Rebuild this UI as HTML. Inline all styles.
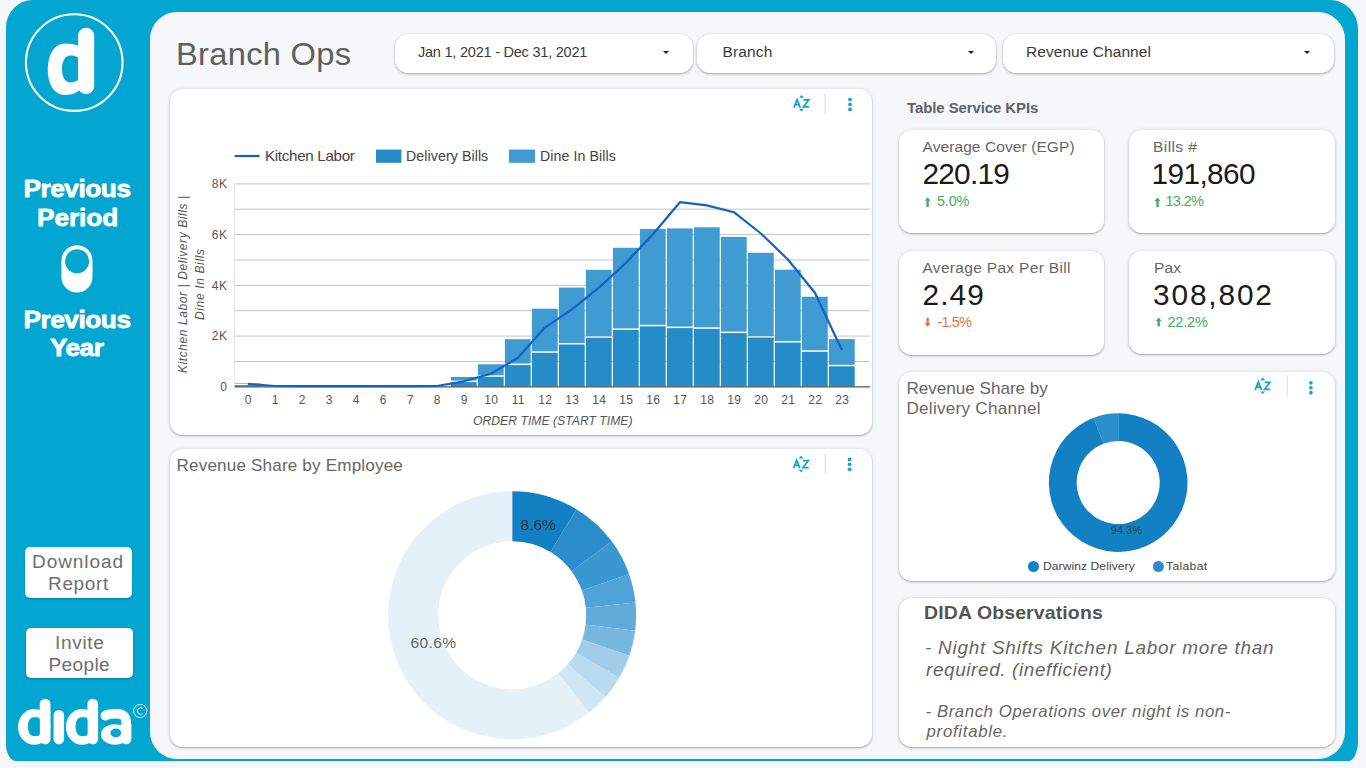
<!DOCTYPE html>
<html><head><meta charset="utf-8">
<style>
*{margin:0;padding:0;box-sizing:border-box}
html,body{width:1366px;height:768px;overflow:hidden;background:#f5f7f9;font-family:"Liberation Sans", sans-serif}
.abs{position:absolute}
.frame{position:absolute;left:6px;top:0px;width:1352px;height:761px;background:#03a5d1;border-radius:27px 28px 10px 10px / 27px 29px 20px 17px}
.panel{position:absolute;left:150px;top:12px;width:1195px;height:747px;background:#f5f7f9;border-radius:27px}
.card{position:absolute;background:#fff;border-radius:12.5px;box-shadow:0 1px 2px rgba(0,0,0,.3),0 0 4px rgba(0,0,0,.1)}
.dd{position:absolute;background:#fff;border-radius:13px;box-shadow:0 1px 2.5px rgba(0,0,0,.32),0 0 1.5px rgba(0,0,0,.12)}
.dd i{position:absolute;top:17px;width:0;height:0;border-left:3px solid transparent;border-right:3px solid transparent;border-top:3.5px solid #222}
.btn{position:absolute;background:#fff;border-radius:5px;box-shadow:0 1px 2px rgba(0,0,0,.25)}
svg text{font-family:"Liberation Sans", sans-serif}
</style></head><body>
<div class="frame"></div>
<div class="panel"></div>

<svg class="abs" style="left:0;top:0" width="150" height="768" viewBox="0 0 150 768">
 <circle cx="74.25" cy="62.6" r="48.3" fill="none" stroke="#fff" stroke-width="2.1"/>
 <path d="M80,46.5 C75,44 69,43.4 65,43.4 C54,43.4 47.8,55 47.8,69.5 C47.8,84 54,95 65,95 C71,95 76,93 80,90 Z" fill="#fff"/>
 <path d="M78.5,57.5 C76,56 73,55.4 70.5,55.4 C65,55.4 61.9,61.5 61.9,69 C61.9,76.5 65,82.5 70.5,82.5 C73,82.5 76,81.5 78.5,80 Z" fill="#03a5d1"/>
 <rect x="78" y="27.8" width="16.2" height="66.4" rx="8" fill="#fff"/>
 <rect x="61.4" y="245.2" width="31.1" height="47.3" rx="15.55" fill="#fff"/>
 <circle cx="77.1" cy="261.3" r="12" fill="#03a5d1"/>
 <!-- dida wordmark -->
 <ellipse cx="34.2" cy="726.9" rx="16.2" ry="17.9" fill="#fff"/>
 <rect x="39.7" y="698.7" width="10.8" height="45.6" rx="5.4" fill="#fff"/>
 <path d="M39.9,720.3 Q39.9,717.2 36.8,717.2 L33.5,717.2 C30,717.2 27.9,721 27.9,726.6 C27.9,732 30,736.1 33.5,736.1 L36.8,736.1 Q39.9,736.1 39.9,733 Z" fill="#03a5d1"/>
 <rect x="53.6" y="710" width="10.5" height="34.3" rx="5.25" fill="#fff"/>
 <ellipse cx="82" cy="726.9" rx="16.1" ry="17.9" fill="#fff"/>
 <rect x="87.4" y="698.7" width="10.7" height="45.6" rx="5.35" fill="#fff"/>
 <path d="M87.6,720.3 Q87.6,717.2 84.5,717.2 L81.3,717.2 C77.8,717.2 75.6,721 75.6,726.6 C75.6,732 77.8,736.1 81.3,736.1 L84.5,736.1 Q87.6,736.1 87.6,733 Z" fill="#03a5d1"/>
 <path d="M105.3,715.6 Q109,713.75 116.5,713.75 Q126.2,713.75 126.2,722" stroke="#fff" stroke-width="9.6" stroke-linecap="round" fill="none"/>
 <rect x="121" y="720" width="10.4" height="24.3" rx="5.2" fill="#fff"/>
 <ellipse cx="115" cy="734.5" rx="14" ry="10.3" fill="#fff"/>
 <ellipse cx="115.8" cy="732.8" rx="5.4" ry="4.4" fill="#03a5d1"/>
 <circle cx="140.2" cy="711" r="6.6" fill="none" stroke="#fff" stroke-width="0.9"/>
 <path d="M142.6,708.3 A3.3,3.3 0 1 0 142.6,713.7" fill="none" stroke="#fff" stroke-width="0.9"/>
</svg>
<div class="btn" style="left:24.8px;top:547px;width:107px;height:51px"></div>
<div class="btn" style="left:26px;top:628.3px;width:106.6px;height:49.5px"></div>

<div class="dd" style="left:394.8px;top:34px;width:297.8px;height:38.6px"><i style="left:268.7px"></i></div>
<div class="dd" style="left:697px;top:34px;width:299px;height:38.6px"><i style="left:270.5px"></i></div>
<div class="dd" style="left:1002.5px;top:34px;width:331px;height:38.6px"><i style="left:301px"></i></div>

<div class="card" style="left:170px;top:89px;width:702.2px;height:345.8px"></div>
<div class="card" style="left:169.8px;top:449px;width:702.4px;height:297.8px"></div>
<div class="card" style="left:899px;top:130px;width:204.5px;height:103px"></div>
<div class="card" style="left:1129px;top:129.5px;width:205.5px;height:103.5px"></div>
<div class="card" style="left:899.3px;top:251px;width:204.5px;height:103.5px"></div>
<div class="card" style="left:1129.4px;top:250.6px;width:205.6px;height:103px"></div>
<div class="card" style="left:899px;top:372px;width:436px;height:208.5px"></div>
<div class="card" style="left:898.5px;top:597.5px;width:436.5px;height:149px"></div>

<svg class="abs" style="left:0;top:0" width="1366" height="768">
<line x1="234.4" y1="361.5" x2="870" y2="361.5" stroke="#c4c4c4" stroke-width="1"/>
<line x1="234.4" y1="336.1" x2="870" y2="336.1" stroke="#c4c4c4" stroke-width="1"/>
<line x1="234.4" y1="310.7" x2="870" y2="310.7" stroke="#c4c4c4" stroke-width="1"/>
<line x1="234.4" y1="285.4" x2="870" y2="285.4" stroke="#c4c4c4" stroke-width="1"/>
<line x1="234.4" y1="260.0" x2="870" y2="260.0" stroke="#c4c4c4" stroke-width="1"/>
<line x1="234.4" y1="234.6" x2="870" y2="234.6" stroke="#c4c4c4" stroke-width="1"/>
<line x1="234.4" y1="209.2" x2="870" y2="209.2" stroke="#c4c4c4" stroke-width="1"/>
<line x1="234.4" y1="183.9" x2="870" y2="183.9" stroke="#c4c4c4" stroke-width="1"/>
<text x="227.60" y="391.05" font-size="12" fill="#555" font-weight="normal" font-style="normal" letter-spacing="0.600" text-anchor="end" >0</text>
<text x="227.60" y="340.30" font-size="12" fill="#555" font-weight="normal" font-style="normal" letter-spacing="0.600" text-anchor="end" >2K</text>
<text x="227.60" y="289.55" font-size="12" fill="#555" font-weight="normal" font-style="normal" letter-spacing="0.600" text-anchor="end" >4K</text>
<text x="227.60" y="238.80" font-size="12" fill="#555" font-weight="normal" font-style="normal" letter-spacing="0.600" text-anchor="end" >6K</text>
<text x="227.60" y="188.05" font-size="12" fill="#555" font-weight="normal" font-style="normal" letter-spacing="0.600" text-anchor="end" >8K</text>
<line x1="234.4" y1="183" x2="234.4" y2="386" stroke="#e6e6e6" stroke-width="1"/>
<rect x="234.9" y="383.0" width="25.8" height="0.6" fill="#3f9bd1"/>
<rect x="234.9" y="385.1" width="25.8" height="1.5" fill="#268cc8"/>
<text x="248.20" y="404.00" font-size="12" fill="#555" font-weight="normal" font-style="normal" letter-spacing="0.300" text-anchor="middle" >0</text>
<rect x="261.9" y="387.0" width="25.8" height="0.0" fill="#268cc8"/>
<text x="275.20" y="404.00" font-size="12" fill="#555" font-weight="normal" font-style="normal" letter-spacing="0.300" text-anchor="middle" >1</text>
<rect x="288.9" y="387.0" width="25.8" height="0.0" fill="#268cc8"/>
<text x="302.20" y="404.00" font-size="12" fill="#555" font-weight="normal" font-style="normal" letter-spacing="0.300" text-anchor="middle" >2</text>
<rect x="315.9" y="387.0" width="25.8" height="0.0" fill="#268cc8"/>
<text x="329.20" y="404.00" font-size="12" fill="#555" font-weight="normal" font-style="normal" letter-spacing="0.300" text-anchor="middle" >3</text>
<rect x="342.9" y="387.0" width="25.8" height="0.0" fill="#268cc8"/>
<text x="356.20" y="404.00" font-size="12" fill="#555" font-weight="normal" font-style="normal" letter-spacing="0.300" text-anchor="middle" >4</text>
<rect x="369.9" y="387.0" width="25.8" height="0.0" fill="#268cc8"/>
<text x="383.20" y="404.00" font-size="12" fill="#555" font-weight="normal" font-style="normal" letter-spacing="0.300" text-anchor="middle" >6</text>
<rect x="396.9" y="387.0" width="25.8" height="0.0" fill="#268cc8"/>
<text x="410.20" y="404.00" font-size="12" fill="#555" font-weight="normal" font-style="normal" letter-spacing="0.300" text-anchor="middle" >7</text>
<rect x="423.9" y="387.0" width="25.8" height="0.0" fill="#268cc8"/>
<text x="437.20" y="404.00" font-size="12" fill="#555" font-weight="normal" font-style="normal" letter-spacing="0.300" text-anchor="middle" >8</text>
<rect x="450.9" y="376.9" width="25.8" height="3.7" fill="#3f9bd1"/>
<rect x="450.9" y="382.1" width="25.8" height="4.5" fill="#268cc8"/>
<text x="464.20" y="404.00" font-size="12" fill="#555" font-weight="normal" font-style="normal" letter-spacing="0.300" text-anchor="middle" >9</text>
<rect x="477.9" y="364.3" width="25.8" height="11.0" fill="#3f9bd1"/>
<rect x="477.9" y="376.8" width="25.8" height="9.8" fill="#268cc8"/>
<text x="491.20" y="404.00" font-size="12" fill="#555" font-weight="normal" font-style="normal" letter-spacing="0.300" text-anchor="middle" >10</text>
<rect x="504.9" y="339.2" width="25.8" height="24.4" fill="#3f9bd1"/>
<rect x="504.9" y="365.1" width="25.8" height="21.5" fill="#268cc8"/>
<text x="518.20" y="404.00" font-size="12" fill="#555" font-weight="normal" font-style="normal" letter-spacing="0.300" text-anchor="middle" >11</text>
<rect x="531.9" y="308.7" width="25.8" height="42.6" fill="#3f9bd1"/>
<rect x="531.9" y="352.8" width="25.8" height="33.8" fill="#268cc8"/>
<text x="545.20" y="404.00" font-size="12" fill="#555" font-weight="normal" font-style="normal" letter-spacing="0.300" text-anchor="middle" >12</text>
<rect x="558.9" y="287.6" width="25.8" height="55.4" fill="#3f9bd1"/>
<rect x="558.9" y="344.5" width="25.8" height="42.1" fill="#268cc8"/>
<text x="572.20" y="404.00" font-size="12" fill="#555" font-weight="normal" font-style="normal" letter-spacing="0.300" text-anchor="middle" >13</text>
<rect x="585.9" y="269.8" width="25.8" height="66.4" fill="#3f9bd1"/>
<rect x="585.9" y="337.7" width="25.8" height="48.9" fill="#268cc8"/>
<text x="599.20" y="404.00" font-size="12" fill="#555" font-weight="normal" font-style="normal" letter-spacing="0.300" text-anchor="middle" >14</text>
<rect x="612.9" y="247.8" width="25.8" height="80.6" fill="#3f9bd1"/>
<rect x="612.9" y="329.9" width="25.8" height="56.7" fill="#268cc8"/>
<text x="626.20" y="404.00" font-size="12" fill="#555" font-weight="normal" font-style="normal" letter-spacing="0.300" text-anchor="middle" >15</text>
<rect x="639.9" y="229.0" width="25.8" height="95.8" fill="#3f9bd1"/>
<rect x="639.9" y="326.3" width="25.8" height="60.3" fill="#268cc8"/>
<text x="653.20" y="404.00" font-size="12" fill="#555" font-weight="normal" font-style="normal" letter-spacing="0.300" text-anchor="middle" >16</text>
<rect x="666.9" y="228.4" width="25.8" height="98.2" fill="#3f9bd1"/>
<rect x="666.9" y="328.1" width="25.8" height="58.5" fill="#268cc8"/>
<text x="680.20" y="404.00" font-size="12" fill="#555" font-weight="normal" font-style="normal" letter-spacing="0.300" text-anchor="middle" >17</text>
<rect x="693.9" y="227.3" width="25.8" height="100.0" fill="#3f9bd1"/>
<rect x="693.9" y="328.8" width="25.8" height="57.8" fill="#268cc8"/>
<text x="707.20" y="404.00" font-size="12" fill="#555" font-weight="normal" font-style="normal" letter-spacing="0.300" text-anchor="middle" >18</text>
<rect x="720.9" y="236.9" width="25.8" height="94.7" fill="#3f9bd1"/>
<rect x="720.9" y="333.1" width="25.8" height="53.5" fill="#268cc8"/>
<text x="734.20" y="404.00" font-size="12" fill="#555" font-weight="normal" font-style="normal" letter-spacing="0.300" text-anchor="middle" >19</text>
<rect x="747.9" y="252.8" width="25.8" height="83.2" fill="#3f9bd1"/>
<rect x="747.9" y="337.5" width="25.8" height="49.1" fill="#268cc8"/>
<text x="761.20" y="404.00" font-size="12" fill="#555" font-weight="normal" font-style="normal" letter-spacing="0.300" text-anchor="middle" >20</text>
<rect x="774.9" y="269.7" width="25.8" height="71.4" fill="#3f9bd1"/>
<rect x="774.9" y="342.6" width="25.8" height="44.0" fill="#268cc8"/>
<text x="788.20" y="404.00" font-size="12" fill="#555" font-weight="normal" font-style="normal" letter-spacing="0.300" text-anchor="middle" >21</text>
<rect x="801.9" y="296.8" width="25.8" height="53.5" fill="#3f9bd1"/>
<rect x="801.9" y="351.8" width="25.8" height="34.8" fill="#268cc8"/>
<text x="815.20" y="404.00" font-size="12" fill="#555" font-weight="normal" font-style="normal" letter-spacing="0.300" text-anchor="middle" >22</text>
<rect x="828.9" y="339.1" width="25.8" height="25.7" fill="#3f9bd1"/>
<rect x="828.9" y="366.3" width="25.8" height="20.3" fill="#268cc8"/>
<text x="842.20" y="404.00" font-size="12" fill="#555" font-weight="normal" font-style="normal" letter-spacing="0.300" text-anchor="middle" >23</text>
<line x1="234.4" y1="386.9" x2="870" y2="386.9" stroke="#555" stroke-width="1.2"/>
<polyline points="247.9,383.9 274.9,386.0 301.9,386.2 328.9,386.2 355.9,386.2 382.9,386.2 409.9,386.1 436.9,386.0 463.9,381.3 490.9,373.8 517.9,357.7 544.9,327.6 571.9,309.3 598.9,287.6 625.9,263.0 652.9,234.2 679.9,202.2 706.9,205.4 733.9,212.2 760.9,233.5 787.9,259.5 814.9,292.7 841.9,350.0" fill="none" stroke="#1163c6" stroke-width="2.2" stroke-linejoin="round"/>
<line x1="234.6" y1="156" x2="259.6" y2="156" stroke="#1163c6" stroke-width="2.2"/>
<rect x="376" y="149.6" width="25.4" height="13.2" fill="#268cc8"/>
<rect x="509" y="149.6" width="26" height="13.2" fill="#3f9bd1"/>
<g transform="translate(186.6,284.2) rotate(-90)"><text x="0.00" y="0.00" font-size="12" fill="#555" font-weight="normal" font-style="italic" letter-spacing="0.590" text-anchor="middle" >Kitchen Labor | Delivery Bills |</text></g>
<g transform="translate(203.6,284.2) rotate(-90)"><text x="0.00" y="0.00" font-size="12" fill="#555" font-weight="normal" font-style="italic" letter-spacing="0.640" text-anchor="middle" >Dine In Bills</text></g>
<path d="M512.20,491.30 A124,124 0 0 1 576.44,509.23 L550.53,552.00 A74,74 0 0 0 512.20,541.30 Z" fill="#1380c4"/>
<path d="M576.44,509.23 A124,124 0 0 1 611.75,541.37 L571.61,571.18 A74,74 0 0 0 550.53,552.00 Z" fill="#2a8ccb"/>
<path d="M611.75,541.37 A124,124 0 0 1 629.09,573.91 L581.96,590.60 A74,74 0 0 0 571.61,571.18 Z" fill="#3a97d0"/>
<path d="M629.09,573.91 A124,124 0 0 1 635.54,602.55 L585.81,607.69 A74,74 0 0 0 581.96,590.60 Z" fill="#50a3d6"/>
<path d="M635.54,602.55 A124,124 0 0 1 635.25,630.63 L585.63,624.45 A74,74 0 0 0 585.81,607.69 Z" fill="#62abd9"/>
<path d="M635.25,630.63 A124,124 0 0 1 629.44,655.67 L582.17,639.39 A74,74 0 0 0 585.63,624.45 Z" fill="#78b8e0"/>
<path d="M629.44,655.67 A124,124 0 0 1 619.26,677.86 L576.09,652.64 A74,74 0 0 0 582.17,639.39 Z" fill="#a2cdea"/>
<path d="M619.26,677.86 A124,124 0 0 1 605.36,697.14 L567.79,664.14 A74,74 0 0 0 576.09,652.64 Z" fill="#b8dbef"/>
<path d="M605.36,697.14 A124,124 0 0 1 589.05,712.61 L558.06,673.37 A74,74 0 0 0 567.79,664.14 Z" fill="#d0e6f3"/>
<path d="M589.05,712.61 A124,124 0 1 1 512.20,491.30 L512.20,541.30 A74,74 0 1 0 558.06,673.37 Z" fill="#e5f1f9"/>
<path d="M1118.20,413.30 A69.3,69.3 0 1 1 1093.70,417.77 L1103.53,443.78 A41.5,41.5 0 1 0 1118.20,441.10 Z" fill="#1380c4"/>
<path d="M1093.70,417.77 A69.3,69.3 0 0 1 1118.20,413.30 L1118.20,441.10 A41.5,41.5 0 0 0 1103.53,443.78 Z" fill="#2b8dca"/>
<circle cx="1033.5" cy="566.5" r="5.5" fill="#1380c4"/>
<circle cx="1158.4" cy="566.5" r="5.5" fill="#2b8dca"/>
<path d="M794.00,107.60 L797.10,99.40 L800.20,107.60 M795.20,104.70 H799.00 M803.40,99.95 H808.70 L803.40,106.85 H809.10" fill="none" stroke="#14a2cf" stroke-width="1.75"/><path d="M799.05,97.80 L801.50,95.10 L803.95,97.80 Z M799.05,109.10 L801.50,111.60 L803.95,109.10 Z" fill="#14a2cf"/><line x1="825.1" y1="93.20" x2="825.1" y2="113.30" stroke="#c3e6f2" stroke-width="1.1"/><circle cx="850" cy="99.50" r="1.85" fill="#14a2cf"/><circle cx="850" cy="104.45" r="1.85" fill="#14a2cf"/><circle cx="850" cy="109.40" r="1.85" fill="#14a2cf"/>
<path d="M793.60,468.30 L796.70,460.10 L799.80,468.30 M794.80,465.40 H798.60 M803.00,460.65 H808.30 L803.00,467.55 H808.70" fill="none" stroke="#14a2cf" stroke-width="1.75"/><path d="M798.65,458.50 L801.10,455.80 L803.55,458.50 Z M798.65,469.80 L801.10,472.30 L803.55,469.80 Z" fill="#14a2cf"/><line x1="825.3" y1="453.90" x2="825.3" y2="474.00" stroke="#c3e6f2" stroke-width="1.1"/><circle cx="849.6" cy="459.40" r="1.85" fill="#14a2cf"/><circle cx="849.6" cy="464.35" r="1.85" fill="#14a2cf"/><circle cx="849.6" cy="469.30" r="1.85" fill="#14a2cf"/>
<path d="M1255.20,390.00 L1258.30,381.80 L1261.40,390.00 M1256.40,387.10 H1260.20 M1264.60,382.35 H1269.90 L1264.60,389.25 H1270.30" fill="none" stroke="#14a2cf" stroke-width="1.75"/><path d="M1260.25,380.20 L1262.70,377.50 L1265.15,380.20 Z M1260.25,391.50 L1262.70,394.00 L1265.15,391.50 Z" fill="#14a2cf"/><line x1="1287.3" y1="375.60" x2="1287.3" y2="395.70" stroke="#c3e6f2" stroke-width="1.1"/><circle cx="1310.9" cy="382.80" r="1.85" fill="#14a2cf"/><circle cx="1310.9" cy="387.75" r="1.85" fill="#14a2cf"/><circle cx="1310.9" cy="392.70" r="1.85" fill="#14a2cf"/>
<path d="M927.6,197.2 l3,3.6 h-1.8 v6.1 h-2.4 v-6.1 h-1.8 z" fill="#47ad56"/>
<path d="M1157.5,197.5 l3,3.6 h-1.8 v5.8 h-2.4 v-5.8 h-1.8 z" fill="#47ad56"/>
<path d="M1158.7,317.5 l3,3.6 h-1.8 v5.3 h-2.4 v-5.3 h-1.8 z" fill="#47ad56"/>
<path d="M927.6,326.9 l3,-3.6 h-1.8 v-5.5 h-2.4 v5.5 h-1.8 z" fill="#e8704a"/>
<g transform="translate(176.00,65.00) scale(1.07,1)"><text x="0.00" y="0.00" font-size="30.5" fill="#5f5f5f" font-weight="normal" font-style="normal" letter-spacing="0.285" text-anchor="start" >Branch Ops</text></g>
<text x="418.00" y="57.00" font-size="14.5" fill="#3a3a3a" font-weight="normal" font-style="normal" letter-spacing="-0.224" text-anchor="start" >Jan 1, 2021 - Dec 31, 2021</text>
<g transform="translate(722.50,57.00) scale(1.07,1)"><text x="0.00" y="0.00" font-size="14.5" fill="#3a3a3a" font-weight="normal" font-style="normal" letter-spacing="0.120" text-anchor="start" >Branch</text></g>
<g transform="translate(1026.00,56.90) scale(1.07,1)"><text x="0.00" y="0.00" font-size="14.5" fill="#3a3a3a" font-weight="normal" font-style="normal" letter-spacing="0.056" text-anchor="start" >Revenue Channel</text></g>
<g transform="translate(23.50,197.10) scale(1.07,1)"><text x="0.00" y="0.00" font-size="24.5" fill="#fff" font-weight="bold" font-style="normal" letter-spacing="-0.429" text-anchor="start" stroke="#fff" stroke-width="0.8" stroke-linejoin="round">Previous</text></g>
<g transform="translate(37.00,225.90) scale(1.07,1)"><text x="0.00" y="0.00" font-size="24.5" fill="#fff" font-weight="bold" font-style="normal" letter-spacing="-0.040" text-anchor="start" stroke="#fff" stroke-width="0.8" stroke-linejoin="round">Period</text></g>
<g transform="translate(23.50,328.10) scale(1.07,1)"><text x="0.00" y="0.00" font-size="24.5" fill="#fff" font-weight="bold" font-style="normal" letter-spacing="-0.429" text-anchor="start" stroke="#fff" stroke-width="0.8" stroke-linejoin="round">Previous</text></g>
<g transform="translate(50.00,355.90) scale(1.07,1)"><text x="0.00" y="0.00" font-size="24.5" fill="#fff" font-weight="bold" font-style="normal" letter-spacing="-0.466" text-anchor="start" stroke="#fff" stroke-width="0.8" stroke-linejoin="round">Year</text></g>
<g transform="translate(32.00,567.90) scale(1.07,1)"><text x="0.00" y="0.00" font-size="17.8" fill="#6e6e6e" font-weight="normal" font-style="normal" letter-spacing="0.857" text-anchor="start" >Download</text></g>
<g transform="translate(48.00,589.90) scale(1.07,1)"><text x="0.00" y="0.00" font-size="17.8" fill="#6e6e6e" font-weight="normal" font-style="normal" letter-spacing="0.600" text-anchor="start" >Report</text></g>
<g transform="translate(55.00,648.80) scale(1.07,1)"><text x="0.00" y="0.00" font-size="17.8" fill="#6e6e6e" font-weight="normal" font-style="normal" letter-spacing="0.640" text-anchor="start" >Invite</text></g>
<g transform="translate(48.50,670.80) scale(1.07,1)"><text x="0.00" y="0.00" font-size="17.8" fill="#6e6e6e" font-weight="normal" font-style="normal" letter-spacing="0.360" text-anchor="start" >People</text></g>
<g transform="translate(265.00,161.40) scale(1.07,1)"><text x="0.00" y="0.00" font-size="14.2" fill="#444" font-weight="normal" font-style="normal" letter-spacing="-0.298" text-anchor="start" >Kitchen Labor</text></g>
<text x="406.00" y="161.40" font-size="14.2" fill="#444" font-weight="normal" font-style="normal" letter-spacing="0.077" text-anchor="start" >Delivery Bills</text>
<text x="540.00" y="161.40" font-size="14.2" fill="#444" font-weight="normal" font-style="normal" letter-spacing="0.083" text-anchor="start" >Dine In Bills</text>
<text x="473.00" y="425.00" font-size="12.2" fill="#555" font-weight="normal" font-style="italic" letter-spacing="0.009" text-anchor="start" >ORDER TIME (START TIME)</text>
<g transform="translate(176.50,471.00) scale(1.07,1)"><text x="0.00" y="0.00" font-size="16" fill="#666" font-weight="normal" font-style="normal" letter-spacing="0.154" text-anchor="start" >Revenue Share by Employee</text></g>
<g transform="translate(907.00,112.80) scale(1.07,1)"><text x="0.00" y="0.00" font-size="14" fill="#5f6368" font-weight="bold" font-style="normal" letter-spacing="-0.079" text-anchor="start" >Table Service KPIs</text></g>
<g transform="translate(922.50,151.80) scale(1.07,1)"><text x="0.00" y="0.00" font-size="14.5" fill="#666" font-weight="normal" font-style="normal" letter-spacing="0.085" text-anchor="start" >Average Cover (EGP)</text></g>
<text x="922.50" y="183.90" font-size="29.8" fill="#1a1a1a" font-weight="normal" font-style="normal" letter-spacing="-0.760" text-anchor="start" >220.19</text>
<text x="937.00" y="205.70" font-size="14.5" fill="#47ad56" font-weight="normal" font-style="normal" letter-spacing="-0.197" text-anchor="start" >5.0%</text>
<g transform="translate(1153.00,151.90) scale(1.07,1)"><text x="0.00" y="0.00" font-size="14.5" fill="#666" font-weight="normal" font-style="normal" letter-spacing="0.398" text-anchor="start" >Bills #</text></g>
<text x="1151.50" y="184.00" font-size="29.8" fill="#1a1a1a" font-weight="normal" font-style="normal" letter-spacing="-0.600" text-anchor="start" >191,860</text>
<text x="1165.50" y="205.80" font-size="14.5" fill="#47ad56" font-weight="normal" font-style="normal" letter-spacing="-0.700" text-anchor="start" >13.2%</text>
<g transform="translate(922.50,273.00) scale(1.07,1)"><text x="0.00" y="0.00" font-size="14.5" fill="#666" font-weight="normal" font-style="normal" letter-spacing="0.295" text-anchor="start" >Average Pax Per Bill</text></g>
<text x="922.50" y="305.00" font-size="29.8" fill="#1a1a1a" font-weight="normal" font-style="normal" letter-spacing="1.130" text-anchor="start" >2.49</text>
<text x="937.50" y="326.90" font-size="14.5" fill="#e8704a" font-weight="normal" font-style="normal" letter-spacing="-0.900" text-anchor="start" >-1.5%</text>
<g transform="translate(1154.00,272.90) scale(1.07,1)"><text x="0.00" y="0.00" font-size="14.5" fill="#666" font-weight="normal" font-style="normal" letter-spacing="0.100" text-anchor="start" >Pax</text></g>
<text x="1153.00" y="305.00" font-size="29.8" fill="#1a1a1a" font-weight="normal" font-style="normal" letter-spacing="1.869" text-anchor="start" >308,802</text>
<text x="1167.50" y="326.90" font-size="14.5" fill="#47ad56" font-weight="normal" font-style="normal" letter-spacing="-0.200" text-anchor="start" >22.2%</text>
<g transform="translate(906.50,393.70) scale(1.07,1)"><text x="0.00" y="0.00" font-size="16" fill="#666" font-weight="normal" font-style="normal" letter-spacing="-0.014" text-anchor="start" >Revenue Share by</text></g>
<g transform="translate(906.50,413.70) scale(1.07,1)"><text x="0.00" y="0.00" font-size="16" fill="#666" font-weight="normal" font-style="normal" letter-spacing="0.239" text-anchor="start" >Delivery Channel</text></g>
<g transform="translate(1043.00,569.90) scale(1.07,1)"><text x="0.00" y="0.00" font-size="11.3" fill="#444" font-weight="normal" font-style="normal" letter-spacing="0.068" text-anchor="start" >Darwinz Delivery</text></g>
<g transform="translate(1166.00,569.90) scale(1.07,1)"><text x="0.00" y="0.00" font-size="11.3" fill="#444" font-weight="normal" font-style="normal" letter-spacing="0.333" text-anchor="start" >Talabat</text></g>
<g transform="translate(924.00,619.00) scale(1.07,1)"><text x="0.00" y="0.00" font-size="18.2" fill="#555" font-weight="bold" font-style="normal" letter-spacing="0.126" text-anchor="start" >DIDA Observations</text></g>
<g transform="translate(925.00,653.90) scale(1.07,1)"><text x="0.00" y="0.00" font-size="17.7" fill="#666" font-weight="normal" font-style="italic" letter-spacing="0.700" text-anchor="start" >- Night Shifts Kitchen Labor more than</text></g>
<g transform="translate(926.00,675.80) scale(1.07,1)"><text x="0.00" y="0.00" font-size="17.7" fill="#666" font-weight="normal" font-style="italic" letter-spacing="0.570" text-anchor="start" >required. (inefficient)</text></g>
<g transform="translate(925.50,716.70) scale(1.07,1)"><text x="0.00" y="0.00" font-size="15.7" fill="#666" font-weight="normal" font-style="italic" letter-spacing="0.533" text-anchor="start" >- Branch Operations over night is non-</text></g>
<g transform="translate(926.50,737.30) scale(1.07,1)"><text x="0.00" y="0.00" font-size="15.7" fill="#666" font-weight="normal" font-style="italic" letter-spacing="0.680" text-anchor="start" >profitable.</text></g>
<text x="520.50" y="530.20" font-size="15.5" fill="#333" font-weight="normal" font-style="normal" letter-spacing="0.000" text-anchor="start" >8.6%</text>
<text x="410.50" y="648.00" font-size="15.5" fill="#666" font-weight="normal" font-style="normal" letter-spacing="0.400" text-anchor="start" >60.6%</text>
<text x="1110.80" y="534.00" font-size="11" fill="#333" font-weight="normal" font-style="normal" letter-spacing="0.000" text-anchor="start" opacity="0.75">94.3%</text>
</svg>
</body></html>
